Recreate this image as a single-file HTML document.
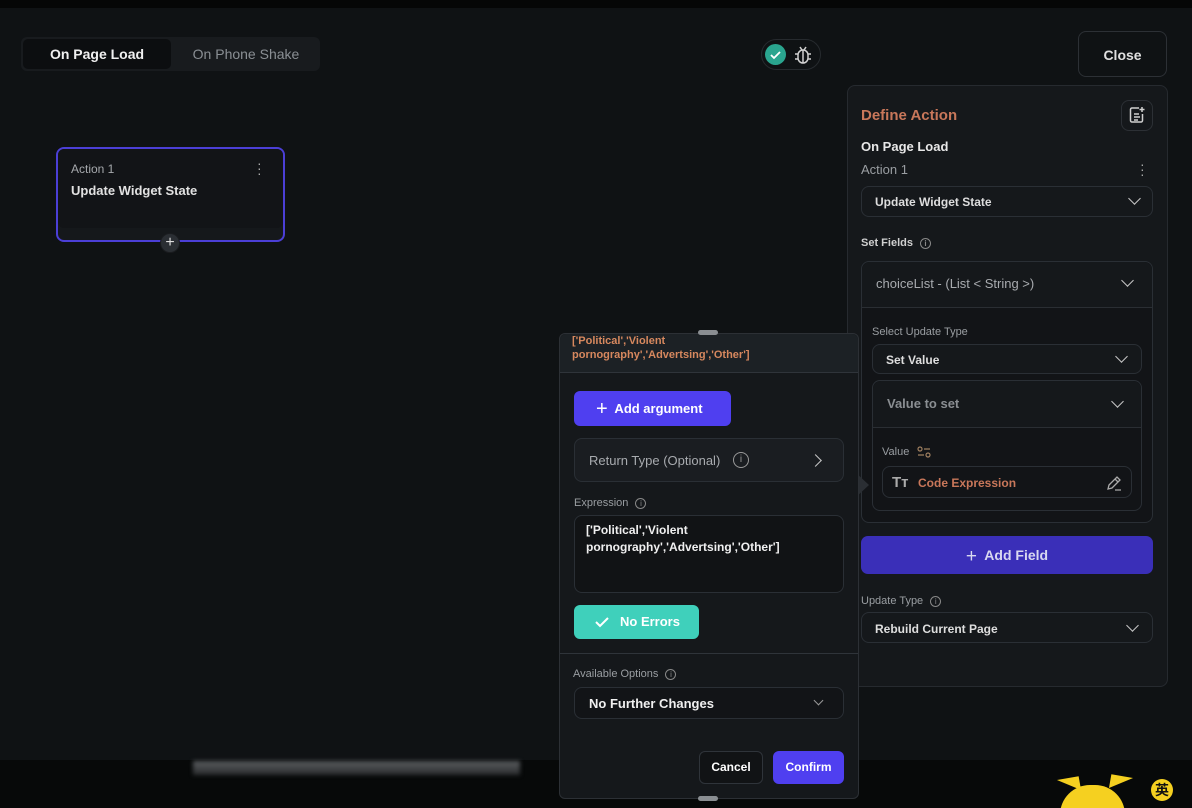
<!DOCTYPE html>
<html style="width:1192px;height:808px;overflow:hidden"><head><meta charset="utf-8"><style>
*{box-sizing:border-box;margin:0;padding:0}
body{width:1192px;height:808px;overflow:hidden;background:#0f1214;font-family:"Liberation Sans","Noto Sans CJK SC",sans-serif;position:relative;color:#e6e6e6}
.abs{position:absolute}
.b{font-weight:bold}
.sel{position:absolute;border:1px solid #2a2f35;border-radius:8px;background:#15181b}
.chev{position:absolute;width:9px;height:9px;border-right:1.5px solid #c8c8c8;border-bottom:1.5px solid #c8c8c8;transform:rotate(45deg)}
.info{display:inline-block;width:11px;height:11px;border:1px solid #888;border-radius:50%;font-size:8px;line-height:9px;text-align:center;color:#888;vertical-align:middle;margin-left:4px}
</style></head><body>
<div class="abs" style="left:0;top:0;width:1192px;height:8px;background:#050606"></div>
<div class="abs" style="left:0;top:760px;width:1192px;height:48px;background:#070909"></div>
<div class="abs" style="left:193px;top:761px;width:327px;height:14px;background:linear-gradient(#5a5d60,#2a2c2e);filter:blur(2px)"></div>

<div class="abs" style="left:21px;top:37px;width:299px;height:34px;background:#181b1e;border-radius:6px"></div>
<div class="abs b" style="left:23px;top:39px;width:148px;height:30px;background:#0c0e10;border-radius:5px;font-size:14px;line-height:30px;text-align:center;color:#f0f0f0">On Page Load</div>
<div class="abs" style="left:172px;top:39px;width:148px;height:30px;font-size:14px;line-height:30px;text-align:center;color:#8a8f94">On Phone Shake</div>

<div class="abs" style="left:761px;top:39px;width:60px;height:31px;border:1px solid #262a2e;border-radius:16px"></div>
<div class="abs" style="left:765px;top:44px;width:21px;height:21px;border-radius:50%;background:#2aa58f"></div>
<svg class="abs" style="left:765px;top:44px" width="21" height="21" viewBox="0 0 21 21" fill="none" stroke="#fff" stroke-width="1.8"><path d="M6 11l3 3 6-6"/></svg>
<svg class="abs" style="left:793px;top:44px" width="20" height="22" viewBox="0 0 20 22" fill="none" stroke="#d0d0d0" stroke-width="1.5"><rect x="5" y="6" width="10" height="13" rx="5"/><path d="M10 6v13M7 3l2 3M13 3l-2 3M2 10h3M15 10h3M2 15h3M15 15h3"/></svg>

<div class="abs b" style="left:1078px;top:31px;width:89px;height:46px;border:1px solid #2c3035;border-radius:8px;font-size:14px;line-height:46px;text-align:center;color:#e0e0e0">Close</div>

<div class="abs" style="left:56px;top:147px;width:229px;height:95px;border:2px solid #4b3fd6;border-radius:8px;background:#15181b"></div>
<div class="abs" style="left:58px;top:149px;width:225px;height:79px;background:#121417;border-radius:6px"></div>
<div class="abs" style="left:71px;top:162px;font-size:12px;color:#a6a9ad">Action 1</div>
<div class="abs b" style="left:71px;top:183px;font-size:13px;color:#e2e2e2">Update Widget State</div>
<div class="abs" style="left:257px;top:161px;width:4px;font-size:14px;line-height:5px;color:#aaa">·<br>·<br>·</div>
<div class="abs" style="left:160px;top:233px;width:20px;height:20px;border-radius:50%;background:#2a2e33;border:1px solid #1a1c1f;color:#ddd;font-size:16px;line-height:18px;text-align:center">+</div>

<div class="abs" style="left:847px;top:85px;width:321px;height:602px;background:#15181b;border:1px solid #262a2f;border-radius:8px"></div>
<div class="abs b" style="left:861px;top:107px;font-size:15px;color:#c8775a">Define Action</div>
<div class="abs" style="left:1121px;top:100px;width:32px;height:31px;border:1px solid #2c3035;border-radius:8px"></div>
<svg class="abs" style="left:1128px;top:106px" width="18" height="18" viewBox="0 0 18 18" fill="none" stroke="#d0d0d0" stroke-width="1.5"><path d="M11 2H4a1.5 1.5 0 0 0-1.5 1.5v11A1.5 1.5 0 0 0 4 16h9a1.5 1.5 0 0 0 1.5-1.5V8M6 8h5M6 11h6M6 14h4M14 1v5M11.5 3.5h5"/></svg>
<div class="abs b" style="left:861px;top:139px;font-size:13px;color:#e8e8e8">On Page Load</div>
<div class="abs" style="left:861px;top:162px;font-size:13px;color:#9a9ea2">Action 1</div>
<div class="abs" style="left:1140px;top:162px;font-size:14px;line-height:5px;color:#aaa">·<br>·<br>·</div>
<div class="sel" style="left:861px;top:186px;width:292px;height:31px"></div>
<div class="abs b" style="left:875px;top:195px;font-size:12px;color:#dedede">Update Widget State</div>
<div class="chev" style="left:1130px;top:194px"></div>
<div class="abs b" style="left:861px;top:237px;font-size:11px;color:#d0d0d0">Set Fields <span class="info">i</span></div>

<div class="sel" style="left:861px;top:261px;width:292px;height:262px;background:#121417"></div>
<div class="abs" style="left:862px;top:262px;width:290px;height:46px;background:#15181b;border-bottom:1px solid #2a2e33;border-radius:8px 8px 0 0"></div>
<div class="abs" style="left:876px;top:276px;font-size:13px;color:#a8abaf">choiceList - (List &lt; String &gt;)</div>
<div class="chev" style="left:1123px;top:276px"></div>
<div class="abs" style="left:872px;top:326px;font-size:11px;color:#9a9ea2">Select Update Type</div>
<div class="sel" style="left:872px;top:344px;width:270px;height:30px"></div>
<div class="abs b" style="left:886px;top:353px;font-size:12px;color:#dedede">Set Value</div>
<div class="chev" style="left:1117px;top:352px"></div>
<div class="sel" style="left:872px;top:380px;width:270px;height:131px;background:#121417"></div>
<div class="abs" style="left:873px;top:381px;width:268px;height:47px;background:#15181b;border-bottom:1px solid #2a2e33;border-radius:8px 8px 0 0"></div>
<div class="abs b" style="left:887px;top:396px;font-size:13px;color:#8a8e92">Value to set</div>
<div class="chev" style="left:1113px;top:397px"></div>
<div class="abs" style="left:882px;top:446px;font-size:11px;color:#9a9ea2">Value</div>
<svg class="abs" style="left:917px;top:446px" width="14" height="12" viewBox="0 0 14 12" fill="none" stroke="#a08060" stroke-width="1.2"><circle cx="3" cy="3" r="2"/><path d="M7 3h6M1 9h6"/><circle cx="11" cy="9" r="2"/></svg>
<div class="sel" style="left:882px;top:466px;width:250px;height:32px;background:#121417"></div>
<div class="abs b" style="left:892px;top:474px;font-size:15px;color:#aaa">Tт</div>
<div class="abs b" style="left:918px;top:476px;font-size:12px;color:#c8775a">Code Expression</div>
<svg class="abs" style="left:1105px;top:474px" width="18" height="18" viewBox="0 0 18 18" fill="none" stroke="#aaa" stroke-width="1.3"><path d="M3 15l1-4 8-8 3 3-8 8zM10 5l3 3M10 16h6"/></svg>

<div class="abs b" style="left:861px;top:536px;width:292px;height:38px;background:#3a2fb8;border-radius:7px;color:#d8d8f0;font-size:14px;line-height:38px;text-align:center"><span style="font-size:19px;font-weight:normal;vertical-align:-2px">+</span>&nbsp; Add Field</div>
<div class="abs" style="left:861px;top:595px;font-size:11px;color:#9a9ea2">Update Type <span class="info">i</span></div>
<div class="sel" style="left:861px;top:612px;width:292px;height:31px"></div>
<div class="abs b" style="left:875px;top:622px;font-size:12px;color:#dedede">Rebuild Current Page</div>
<div class="chev" style="left:1128px;top:621px"></div>

<div class="abs" style="left:855px;top:472px;width:0;height:0;border-top:13px solid transparent;border-bottom:13px solid transparent;border-left:14px solid #2a2e33"></div>
<div class="abs" style="left:559px;top:333px;width:300px;height:466px;background:#15181b;border:1px solid #2c3035;border-radius:6px"></div>
<div class="abs" style="left:560px;top:334px;width:298px;height:39px;background:#1c2125;border-bottom:1px solid #2f343a;border-radius:6px 6px 0 0"></div>
<div class="abs" style="left:698px;top:330px;width:20px;height:5px;background:#8a8e92;border-radius:3px"></div>
<div class="abs" style="left:698px;top:796px;width:20px;height:5px;background:#8a8e92;border-radius:3px"></div>
<div class="abs b" style="left:572px;top:334px;font-size:11px;line-height:14px;color:#d7885e">['Political','Violent<br>pornography','Advertsing','Other']</div>
<div class="abs b" style="left:574px;top:391px;width:157px;height:35px;background:#4f3ff0;border-radius:6px;color:#fff;font-size:13px;line-height:35px;padding-left:22px"><span style="font-size:20px;font-weight:normal;vertical-align:-2px">+</span>&nbsp; Add argument</div>
<div class="sel" style="left:574px;top:438px;width:270px;height:44px;background:#1a1d21"></div>
<div class="abs" style="left:589px;top:453px;font-size:13px;color:#a8abaf">Return Type (Optional)</div>
<div class="abs" style="left:733px;top:452px;width:16px;height:16px;border:1.3px solid #999;border-radius:50%;font-size:10px;line-height:14px;text-align:center;color:#999">i</div>
<div class="chev" style="left:811px;top:456px;transform:rotate(-45deg)"></div>
<div class="abs" style="left:574px;top:497px;font-size:11px;color:#9a9ea2">Expression <span class="info">i</span></div>
<div class="sel" style="left:574px;top:515px;width:270px;height:78px;background:#111315"></div>
<div class="abs b" style="left:586px;top:522px;font-size:12px;line-height:17px;color:#f0f0f0">['Political','Violent<br>pornography','Advertsing','Other']</div>
<div class="abs b" style="left:574px;top:605px;width:125px;height:34px;background:#3fd0bb;border-radius:6px;color:#fff;font-size:13px;line-height:34px;padding-left:46px">No Errors</div>
<svg class="abs" style="left:594px;top:614px" width="16" height="16" viewBox="0 0 16 16" fill="none" stroke="#fff" stroke-width="2"><path d="M2 8l4 4 8-8"/></svg>
<div class="abs" style="left:560px;top:653px;width:298px;height:1px;background:#2f343a"></div>
<div class="abs" style="left:573px;top:668px;font-size:11px;color:#9a9ea2">Available Options <span class="info">i</span></div>
<div class="sel" style="left:574px;top:687px;width:270px;height:32px;background:#121417"></div>
<div class="abs b" style="left:589px;top:696px;font-size:13px;color:#f0f0f0">No Further Changes</div>
<div class="chev" style="left:815px;top:697px;width:7px;height:7px;border-color:#999"></div>
<div class="abs b" style="left:699px;top:751px;width:64px;height:33px;border:1px solid #2f343a;border-radius:6px;background:#111315;color:#fff;font-size:12px;line-height:31px;text-align:center">Cancel</div>
<div class="abs b" style="left:773px;top:751px;width:71px;height:33px;border-radius:6px;background:#4f3ff0;color:#fff;font-size:12px;line-height:33px;text-align:center">Confirm</div>

<div class="abs" style="left:1040px;top:770px;width:152px;height:38px;overflow:hidden">
<div class="abs" style="left:20px;top:15px;width:65px;height:30px;border-radius:30px 30px 0 0;background:#f5d020"></div>
<div class="abs" style="left:18px;top:8px;width:0;height:0;border-left:22px solid transparent;border-top:14px solid #f5d020;transform:rotate(-10deg)"></div>
<div class="abs" style="left:70px;top:6px;width:0;height:0;border-right:22px solid transparent;border-top:14px solid #f5d020;transform:rotate(10deg)"></div>
<div class="abs b" style="left:111px;top:9px;width:22px;height:22px;border-radius:50%;background:#f5d020;color:#111;font-size:14px;line-height:22px;text-align:center">英</div>
</div>
</body></html>
